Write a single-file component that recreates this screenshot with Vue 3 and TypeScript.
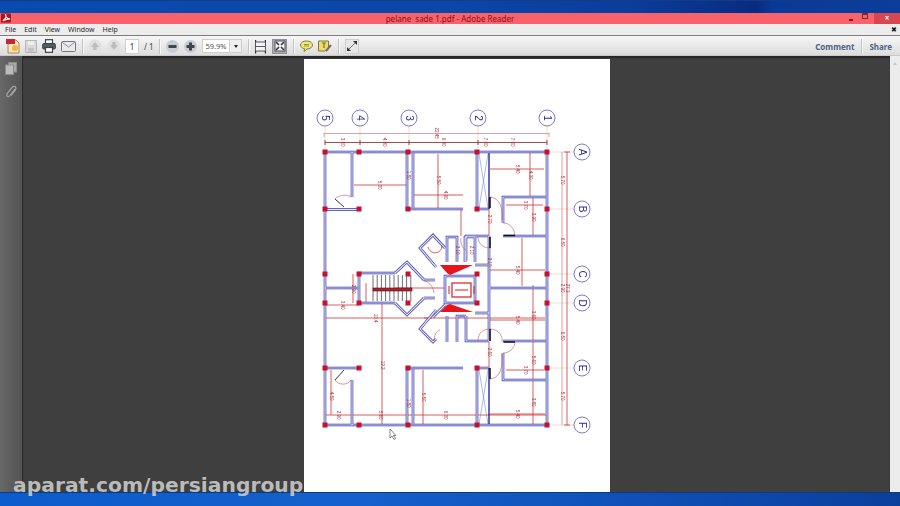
<script setup lang="ts">
const menus: string[] = ['File', 'Edit', 'View', 'Window', 'Help']

interface Bubble { x: number; y: number; t: string }
const bubbles: Bubble[] = [
  { x: 325, y: 118, t: '5' }, { x: 360, y: 118, t: '4' }, { x: 409, y: 118, t: '3' },
  { x: 478, y: 118, t: '2' }, { x: 547, y: 118, t: '1' },
  { x: 582, y: 152, t: 'A' }, { x: 582, y: 209, t: 'B' }, { x: 582, y: 274, t: 'C' },
  { x: 582, y: 303, t: 'D' }, { x: 582, y: 368, t: 'E' }, { x: 582, y: 425, t: 'F' }
]

const leaders: string[] = [
  'M325 126V150', 'M360 126V150', 'M409 126V150', 'M478 126V150', 'M547 126V150',
  'M549 152H574', 'M549 209H574', 'M549 274H574', 'M549 303H574', 'M549 368H574', 'M549 425H574'
]

const lightDims: string[] = ['M324 133.5H549', 'M562 152V425', 'M324 133V137', 'M549 133V137']
const darkDims: string[] = ['M325 142.5H547', 'M325 140V145M360 140V145M409 140V145M478 140V145M547 140V145']

const dims: string[] = [
  'M567 152V425', 'M564 152H570M564 425H570',
  'M354 185H406', 'M414 195H463', 'M438 154V208', 'M490 169H544', 'M530 153V197',
  'M506 205H543', 'M533 197V236', 'M489 198V292', 'M326 318H432', 'M382 303V425',
  'M326 415H547', 'M331 370V415', 'M423 370V425', 'M490 320H545', 'M533 285V425',
  'M506 370H544', 'M489 414H545', 'M522 238V286', 'M490 270H545', 'M326 305H358',
  'M489 342V368', 'M366 283V303', 'M353 274V303', 'M442 245C442 255 430 255 428 247',
  'M424 318L440 318', 'M440 318H545', 'M461 210V236', 'M395 288H445'
]

const walls: string[] = [
  'M325 152H547V425H325Z',
  'M407 152V209H463', 'M413 153V208',
  'M352 152V197', 'M325 209.5H359',
  'M477 152V209H489',
  'M503 223V197H546', 'M503 236H546', 'M466 261V236H489', 'M489 236V341',
  'M489 288H546', 'M466 316V341H489', 'M503 341H546',
  'M503 353V380H546',
  'M407 425V368H463', 'M413 369V424',
  'M352 425V380', 'M325 368H359',
  'M477 425V368H489',
  'M325 288H358', 'M359 303V273H395', 'M359 303H395',
  'M395 273L407 262L424 280', 'M395 303L407 315L424 298',
  'M436 267L420 248L433 235L445 248', 'M436 310L420 329L433 342L436 339',
  'M424 280H435', 'M424 298H435',
  'M447 262V237H457V262', 'M465 262V237H475V262',
  'M447 342V316', 'M457 342V316H466', 'M433 317L445 305',
  'M475 265H489', 'M475 313H489', 'M445 276H475V303H445Z'
]

const heavy: string[] = [
  'M503.5 235.5H515', 'M490 197V208', 'M490 237V248',
  'M503.5 342H515', 'M490 329V341', 'M490 368V379'
]

const arcs: string[] = [
  'M335 199C338 195 347 194 351 197', 'M335 380C338 385 347 386 351 380',
  'M490 197C500 198 503 208 502 220', 'M503 223C510 223 514 228 515 235',
  'M490 248C480 248 478 240 478 237', 'M466 250C462 248 460 242 461 238',
  'M490 329C500 329 503 338 502 342', 'M503 353C510 353 514 348 515 343',
  'M490 379C499 378 503 370 502 354', 'M478 341C478 332 484 329 490 329',
  'M423 280C430 282 433 287 434 293', 'M440 330C436 331 434 336 434 341'
]

const treads: number[] = Array.from({ length: 10 }, (_, i) => 373 + i * 4.2)

interface Col { x: number; y: number }
const rowsX: number[] = [325, 359, 408, 477, 547]
const cols: Col[] = [152, 209, 274, 303, 368, 425].flatMap((y) => rowsX.map((x) => ({ x, y })))

interface Label { x: number; y: number; t: string }
const labels: Label[] = [
  { x: 436, y: 133, t: '22.45' }, { x: 342, y: 142, t: '3.50' }, { x: 384, y: 142, t: '4.90' },
  { x: 443, y: 142, t: '6.90' }, { x: 485, y: 142, t: '7.00' }, { x: 512, y: 142, t: '7.00' },
  { x: 379, y: 185, t: '5.30' }, { x: 438, y: 180, t: '5.50' }, { x: 445, y: 195, t: '4.90' },
  { x: 517, y: 169, t: '5.40' }, { x: 530, y: 175, t: '4.30' }, { x: 525, y: 205, t: '3.70' },
  { x: 533, y: 217, t: '3.90' }, { x: 489, y: 219, t: '2.70' }, { x: 489, y: 262, t: '2.10' },
  { x: 375, y: 318, t: '10.4' }, { x: 382, y: 365, t: '12.2' }, { x: 380, y: 415, t: '5.60' },
  { x: 338, y: 415, t: '2.90' }, { x: 331, y: 396, t: '4.50' }, { x: 445, y: 415, t: '6.30' },
  { x: 423, y: 397, t: '5.50' }, { x: 517, y: 414, t: '5.40' }, { x: 533, y: 402, t: '3.80' },
  { x: 525, y: 370, t: '3.70' }, { x: 533, y: 360, t: '5.60' }, { x: 517, y: 320, t: '5.40' },
  { x: 533, y: 315, t: '3.60' }, { x: 517, y: 270, t: '5.40' }, { x: 342, y: 305, t: '3.40' },
  { x: 408, y: 175, t: '1.80' }, { x: 562, y: 180, t: '5.70' }, { x: 562, y: 242, t: '6.50' },
  { x: 562, y: 288, t: '2.90' }, { x: 562, y: 336, t: '6.50' }, { x: 562, y: 396, t: '5.70' },
  { x: 567, y: 288, t: '27.3' }, { x: 489, y: 352, t: '2.60' }, { x: 408, y: 403, t: '1.80' },
  { x: 457, y: 250, t: '2.10' }, { x: 471, y: 250, t: '2.10' }, { x: 353, y: 289, t: '2.90' }
]
</script>

<template>
  <div class="screen">
    <div class="desk-top"></div>

    <div class="titlebar">
      <div class="title-left">
        <svg class="app-icon" width="10" height="10" viewBox="0 0 11 10">
          <rect width="11" height="10" fill="#b3121f" />
          <path d="M2 8C5 6 6 3 5 1C5 4 7 6 10 6C7 6 4 7 2 8Z" fill="none" stroke="#fff" stroke-width="1.2" />
        </svg>
      </div>
      <div class="title-text">pelane&nbsp; sade 1.pdf - Adobe Reader</div>
      <div class="win-controls">
        <span class="win-min"></span>
        <span class="win-max"></span>
        <span class="win-close">×</span>
      </div>
    </div>

    <div class="menubar">
      <span v-for="m in menus" :key="m" class="menu">{{ m }}</span>
      <span class="menu-close">✖</span>
    </div>

    <div class="toolbar">
      <svg class="ic" width="14" height="16" viewBox="0 0 14 16">
        <path d="M2 2H10L13 5V15H2Z" fill="#f7e6c4" stroke="#a98a58" />
        <rect x="0" y="1" width="9" height="5" fill="#c9262f" />
        <circle cx="9" cy="10" r="3" fill="#f3b63c" />
      </svg>
      <svg class="ic" width="12" height="13" viewBox="0 0 12 13">
        <path d="M.5.5H11.5V12.5H.5Z" fill="#d9d9d9" stroke="#b5b5b5" />
        <rect x="3" y="1" width="6" height="4" fill="#ededed" />
        <rect x="3" y="8" width="6" height="4" fill="#c4c4c4" />
      </svg>
      <svg class="ic" width="14" height="14" viewBox="0 0 14 14">
        <rect x="3.5" y=".7" width="7" height="4" fill="#fff" stroke="#3d4249" stroke-width="1.2" />
        <rect x=".7" y="4.5" width="12.6" height="5.5" rx="1" fill="#555b62" stroke="#3d4249" />
        <rect x="3.5" y="8.5" width="7" height="4.8" fill="#fff" stroke="#3d4249" stroke-width="1.2" />
      </svg>
      <svg class="ic" width="15" height="11" viewBox="0 0 15 11">
        <rect x=".5" y=".5" width="14" height="10" rx="1" fill="#e9e9e9" stroke="#73787e" />
        <path d="M1 1L7.5 6L14 1" fill="none" stroke="#8b9096" />
      </svg>
      <span class="sep sep-a"></span>
      <svg class="ic" width="14" height="14" viewBox="0 0 14 14">
        <circle cx="7" cy="7" r="6.5" fill="#e1e1e1" />
        <path d="M7 3L11 8H8.6V11H5.4V8H3Z" fill="#bcbcbc" />
      </svg>
      <svg class="ic" width="14" height="14" viewBox="0 0 14 14">
        <circle cx="7" cy="7" r="6.5" fill="#e1e1e1" />
        <path d="M7 11L3 6H5.4V3H8.6V6H11Z" fill="#bcbcbc" />
      </svg>
      <span class="page-input">1</span>
      <span class="page-count">/ 1</span>
      <span class="sep sep-b"></span>
      <svg class="ic" width="13" height="13" viewBox="0 0 13 13">
        <circle cx="6.5" cy="6.5" r="6.5" fill="#c9cdd1" />
        <rect x="2.5" y="5" width="8" height="3" fill="#3f454c" />
      </svg>
      <svg class="ic" width="13" height="13" viewBox="0 0 13 13">
        <circle cx="6.5" cy="6.5" r="6.5" fill="#c9cdd1" />
        <path d="M5 2.5H8V5H10.5V8H8V10.5H5V8H2.5V5H5Z" fill="#3f454c" />
      </svg>
      <span class="zoom-input">59.9%</span>
      <span class="zoom-arrow"></span>
      <span class="sep sep-c"></span>
      <svg class="ic fit" width="11" height="15" viewBox="0 0 11 15">
        <rect x=".5" y="3" width="10" height="9" fill="#f4f4f4" stroke="#54595f" />
        <path d="M.5 1V3M10.5 1V3M.5 12V14.5M10.5 12V14.5" stroke="#2f3338" stroke-width="1.4" />
        <path d="M1 7.5H10" stroke="#54595f" />
      </svg>
      <span class="fit-page">
        <svg width="12" height="12" viewBox="0 0 12 12">
          <rect x="1" y="1" width="10" height="10" fill="#f2f2f2" stroke="#50555b" />
          <path d="M2 2L5 5M10 2L7 5M2 10L5 7M10 10L7 7" stroke="#35393e" stroke-width="1.6" />
        </svg>
      </span>
      <span class="sep sep-c"></span>
      <svg class="ic" width="13" height="12" viewBox="0 0 13 12">
        <path d="M6.5 1C10 1 12.5 2.8 12.5 5C12.5 7.2 10 9 7 9L4 11.5L4.5 8.7C2 8.2 .5 6.8 .5 5C.5 2.8 3 1 6.5 1Z" fill="#f2e678" stroke="#77823a" />
        <path d="M4 4.5H9M4 6H9" stroke="#77823a" stroke-width=".8" />
      </svg>
      <svg class="ic note" width="14" height="13" viewBox="0 0 14 13">
        <path d="M.5 1H10.5V8L7 11H.5Z" fill="#eedc6b" stroke="#7f7a3c" />
        <path d="M4 3H8M6 3V8" stroke="#7f6f2a" stroke-width="1.2" />
        <path d="M8 11L13 5" stroke="#6d6f76" stroke-width="2" />
      </svg>
      <span class="sep sep-e"></span>
      <span class="full">
        <svg width="10" height="10" viewBox="0 0 10 10">
          <path d="M6 0H10V4ZM4 10H0V6Z" fill="#2d3136" />
          <path d="M8 2L2 8" stroke="#6e7379" />
        </svg>
      </span>
      <span class="grow"></span>
      <span class="tool-link">Comment</span>
      <span class="sep sep-f"></span>
      <span class="tool-link share">Share</span>
    </div>

    <div class="body">
      <aside class="sidebar">
        <svg width="12" height="13" viewBox="0 0 12 13">
          <rect x="3.5" y=".5" width="8" height="9.5" fill="#a8a8a8" stroke="#8c8c8c" />
          <rect x=".5" y="3" width="8" height="9.5" fill="#bcbcbc" stroke="#8c8c8c" />
        </svg>
        <svg width="11" height="14" viewBox="0 0 11 14">
          <path d="M9 4L4 10.5C3 12 1 12 1 10.5C.5 9.5 1 8.8 1.5 8L6.5 2C7.5 .8 9.8 1 10 3C10.2 4 9.5 4.8 9 5.5L5 10.5" fill="none" stroke="#a5a5a5" stroke-width="1.2" />
        </svg>
      </aside>

      <main class="viewer">
        <div class="page">
          <svg class="plan" width="306" height="433" viewBox="304 59 306 433">
            <g class="lead">
              <path v-for="(d, i) in leaders" :key="i" :d="d" />
            </g>
            <g class="light-dim">
              <path v-for="(d, i) in lightDims" :key="i" :d="d" />
            </g>
            <g class="dark-dim">
              <path v-for="(d, i) in darkDims" :key="i" :d="d" />
            </g>
            <g class="dim">
              <path v-for="(d, i) in dims" :key="i" :d="d" />
            </g>
            <g class="wall-out">
              <path v-for="(d, i) in walls" :key="i" :d="d" />
            </g>
            <g class="wall-in">
              <path v-for="(d, i) in walls" :key="i" :d="d" />
            </g>
            <g class="shaft">
              <path d="M479 154L488 208M488 154L479 208M479 370L488 424M488 370L479 424" />
            </g>
            <path class="navy" d="M489 153V209M489 368V424" />
            <g class="arc">
              <path v-for="(d, i) in arcs" :key="i" :d="d" />
            </g>
            <g class="heavy">
              <path v-for="(d, i) in heavy" :key="i" :d="d" />
              <path d="M335 199L344 207M335 380L344 370" class="thin-black" />
            </g>
            <path d="M440 265H473L450 275L447 273Z" fill="#e8141c" />
            <path d="M440 312H473L450 304L447 305Z" fill="#e8141c" />
            <g class="stair">
              <path v-for="x in treads" :key="x" :d="`M${x} 275V301`" />
              <rect x="373" y="288" width="39" height="3" />
            </g>
            <g class="lift">
              <rect x="452" y="283" width="19" height="14" />
              <path d="M449 286V294M474 286V294M455 290H468" />
            </g>
            <rect v-for="c in cols" :key="`${c.x}-${c.y}`" :x="c.x - 2.5" :y="c.y - 2.5" width="5" height="5" fill="#c8102e" />
            <text
              v-for="(l, i) in labels"
              :key="i"
              class="dim-text"
              :transform="`translate(${l.x} ${l.y}) rotate(90)`"
              text-anchor="middle"
              dy="1.2"
            >{{ l.t }}</text>
            <g v-for="b in bubbles" :key="b.t">
              <circle :cx="b.x" :cy="b.y" r="8" fill="#fff" stroke="#7c7cc0" stroke-width="1" />
              <text
                class="bubble-text"
                :transform="`translate(${b.x} ${b.y}) rotate(90)`"
                text-anchor="middle"
                dy="3.5"
              >{{ b.t }}</text>
            </g>
            <path d="M390 429V438L392 436L394 439.5L395.5 438.5L393.5 435.5H396Z" fill="#fff" stroke="#555" stroke-width=".7" />
          </svg>
        </div>
      </main>

      <div class="scrollbar"><span class="scroll-up"></span></div>
    </div>

    <div class="desk-bottom"></div>
    <div class="watermark">aparat.com/persiangroup</div>
  </div>
</template>

<style>
html, body { margin: 0; background: #3f3f3f; }
</style>

<style scoped>
.screen {
  position: relative;
  width: 900px;
  height: 506px;
  overflow: hidden;
  display: flex;
  flex-direction: column;
  font-family: "Noto Sans", sans-serif;
}
.desk-top {
  height: 13px;
  flex: none;
  box-sizing: border-box;
  border-top: 1px solid #123c85;
  background: linear-gradient(90deg, #0a4bb0 0%, #0b46a8 50%, #0a3d9c 70%, #082b80 84%, #0a3a98 86%, #0a3d9c 100%);
}
.titlebar {
  height: 11px;
  flex: none;
  background: #f8626b;
  display: grid;
  grid-template-columns: 1fr auto 1fr;
  align-items: center;
}
.title-left { display: flex; align-items: center; padding-left: 1px; }
.app-icon { display: block; margin-top: -2px; }
.title-text {
  font-size: 8px;
  line-height: 11px;
  color: #8b0f1c;
  white-space: nowrap;
}
.win-controls { display: flex; justify-content: flex-end; align-items: stretch; height: 11px; }
.win-min { width: 4px; height: 2px; background: #6e2229; margin: 6px 9px 0 0; }
.win-max { width: 4px; height: 3px; border: 1px solid #7a2a32; border-top-width: 2px; margin: 0 6px 0 0; }
.win-close {
  width: 26px;
  background: #d8464f;
  color: #fff;
  font-size: 8px;
  line-height: 10px;
  text-align: center;
  font-weight: bold;
}
.menubar {
  height: 11px;
  flex: none;
  background: #ececec;
  border-bottom: 1px solid #7d7d7d;
  display: flex;
  align-items: center;
  padding-left: 5px;
  font-size: 7px;
  color: #2a2a2a;
}
.menu { margin-right: 8px; line-height: 11px; }
.menu-close { margin-left: auto; margin-right: 3px; font-size: 7px; color: #111; }
.toolbar {
  height: 20px;
  flex: none;
  background: linear-gradient(#f6f6f6, #dcdcdc);
  display: flex;
  align-items: center;
  padding-left: 6px;
  box-shadow: inset 0 -1px 0 #c8c8c8;
}
.ic { display: block; flex: none; margin-right: 5px; }
.sep { width: 1px; height: 15px; background: #c4c4c4; flex: none; box-shadow: 1px 0 0 #f8f8f8; }
.sep-a { margin: 0 5px 0 1px; }
.sep-b { margin: 0 6px 0 3px; }
.sep-c { margin: 0 6px; }
.sep-e { margin: 0 6px 0 5px; }
.sep-f { margin: 0 7px 0 7px; }
.page-input {
  width: 14px;
  height: 15px;
  background: #fff;
  border: 1px solid #d0d0d0;
  box-sizing: border-box;
  margin-left: -1px;
  font-size: 8px;
  line-height: 13px;
  text-align: center;
  color: #333;
}
.page-count { font-size: 8px; color: #444; margin-left: 5px; margin-right: 1px; width: 11px; }
.zoom-input {
  width: 28px;
  height: 14px;
  box-sizing: border-box;
  background: #fff;
  border: 1px solid #d0d0d0;
  font-size: 7.5px;
  line-height: 12px;
  text-align: center;
  color: #555;
}
.zoom-arrow {
  width: 12px;
  height: 14px;
  box-sizing: border-box;
  background: #efefef;
  border: 1px solid #cfcfcf;
  border-left: none;
  position: relative;
}
.zoom-arrow::after {
  content: "";
  position: absolute;
  left: 4px;
  top: 5px;
  border: 2px solid transparent;
  border-top: 3px solid #222;
}
.fit { margin-right: 6px; }
.fit-page {
  width: 15px;
  height: 15px;
  background: #a9acb0;
  border: 1px solid #8f9398;
  box-sizing: border-box;
  display: flex;
  align-items: center;
  justify-content: center;
  flex: none;
}
.note { margin-right: 1px; }
.full {
  width: 14px;
  height: 15px;
  box-sizing: border-box;
  background: #e7e7e7;
  border: 1px solid #cfcfcf;
  display: flex;
  align-items: center;
  justify-content: center;
  flex: none;
}
.grow { flex: 1; }
.tool-link { font-size: 8px; font-weight: 700; color: #4f6384; }
.share { margin-right: 8px; }
.body {
  flex: 1;
  min-height: 0;
  display: flex;
}
.sidebar {
  width: 23px;
  flex: none;
  box-sizing: border-box;
  border-right: 1px solid #2b2b2b;
  background: linear-gradient(90deg, #686868, #535353);
  display: flex;
  flex-direction: column;
  align-items: center;
  padding-top: 6px;
  gap: 10px;
}
.sidebar svg { display: block; }
.viewer {
  flex: 1;
  min-width: 0;
  background: #3f3f3f;
  box-shadow: inset 0 2px 1px #262626;
  display: flex;
  padding-top: 3px;
  overflow: hidden;
  box-sizing: border-box;
}
.page {
  margin-left: 281px;
  width: 306px;
  height: 433px;
  flex: none;
  background: #fff;
}
.plan { display: block; filter: blur(0.2px); }
.lead path { fill: none; stroke: #e3c9a8; stroke-width: .6; }
.light-dim path { fill: none; stroke: #d68a8a; stroke-width: .8; }
.dark-dim path { fill: none; stroke: #8e3b3f; stroke-width: .9; }
.dim path { fill: none; stroke: #cf3238; stroke-width: .8; }
.wall-out path { fill: none; stroke: #2f33a6; stroke-width: 2.6; }
.wall-in path { fill: none; stroke: #e6e7fb; stroke-width: 1.2; }
.shaft path { fill: none; stroke: #6f8fd8; stroke-width: .6; }
.navy { fill: none; stroke: #1a1a9c; stroke-width: 1.3; }
.arc path { fill: none; stroke: #c2525a; stroke-width: .6; }
.heavy path { fill: none; stroke: #111; stroke-width: 1.5; }
.heavy .thin-black { stroke-width: .9; stroke: #222; }
.stair path { stroke: #32323c; stroke-width: .7; fill: none; }
.stair rect { fill: #b0202c; stroke: #5a1015; stroke-width: .6; }
.lift rect { fill: none; stroke: #d81b22; stroke-width: 1.2; }
.lift path { fill: none; stroke: #d81b22; stroke-width: 1; }
.dim-text { font-family: "Liberation Sans", sans-serif; font-size: 4.5px; fill: #a52a30; }
.bubble-text { font-family: "Liberation Sans", sans-serif; font-size: 10px; fill: #2c2c96; }
.scrollbar {
  width: 10px;
  flex: none;
  background: #ececec;
  display: flex;
  justify-content: center;
  padding-top: 4px;
  box-sizing: border-box;
}
.scroll-up {
  width: 0;
  height: 0;
  border: 2px solid transparent;
  border-bottom: 3px solid #c4c4c4;
}
.desk-bottom {
  height: 14px;
  flex: none;
  box-sizing: border-box;
  border-top: 1px solid #0a3a80;
  background: linear-gradient(90deg, #0b5ccc 0%, #1560cc 40%, #0f50b8 70%, #0b3f9c 100%);
}
.watermark {
  position: absolute;
  left: 13px;
  top: 473px;
  font-family: "DejaVu Sans", sans-serif;
  font-weight: 700;
  font-size: 20.3px;
  line-height: 24px;
  white-space: nowrap;
  color: rgba(205, 205, 205, 0.88);
}
</style>
